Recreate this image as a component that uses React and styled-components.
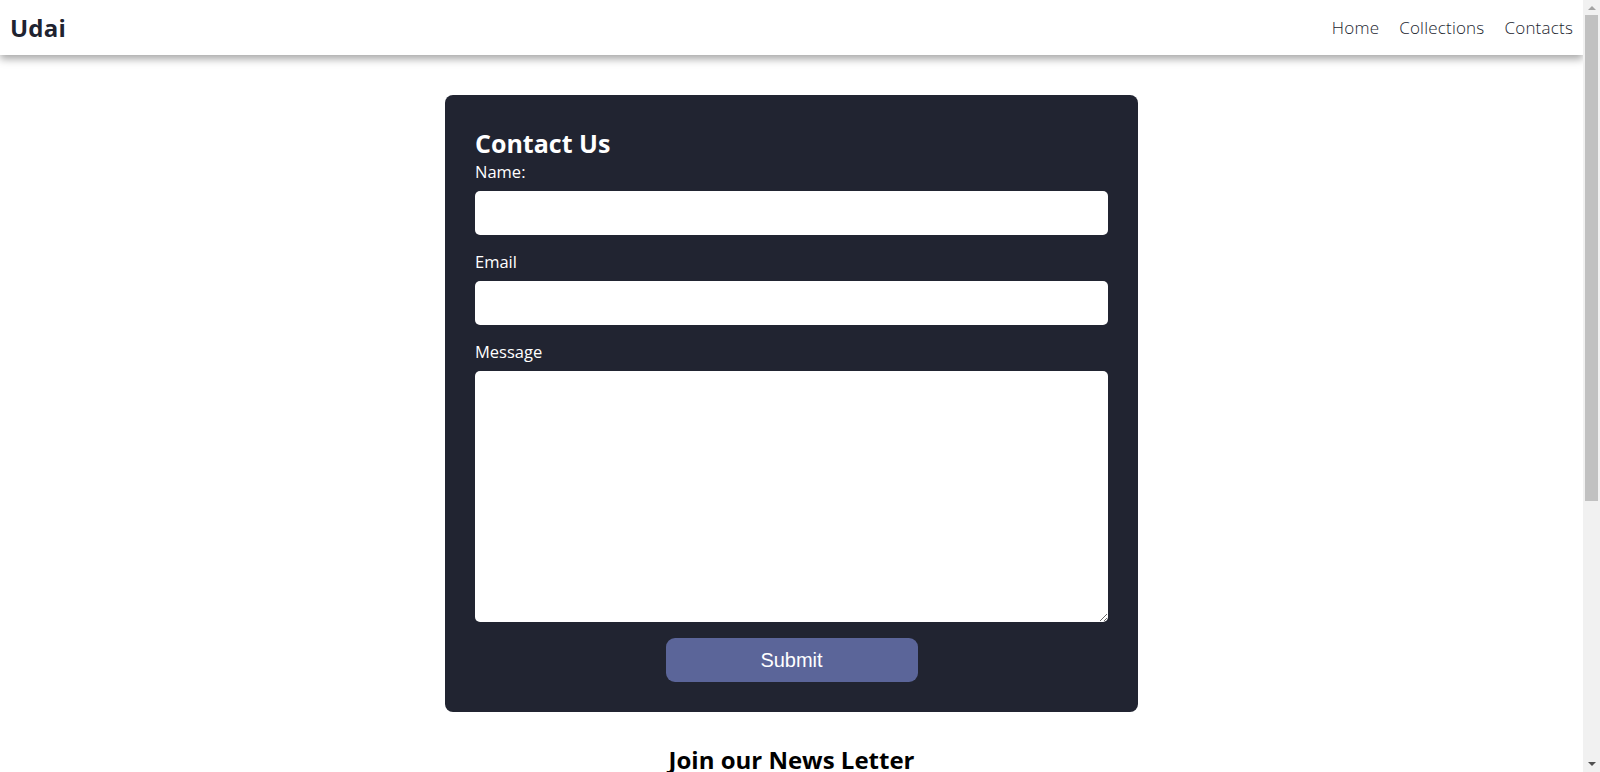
import styled, { createGlobalStyle } from 'styled-components';

const GlobalStyle = createGlobalStyle`
  * {
    box-sizing: border-box;
  }
  body {
    margin: 0;
    padding-right: 17px;
    font-family: "Open Sans", "Liberation Sans", sans-serif;
    background: #fff;
  }
`;

function App() {
  return (
    <>
      <GlobalStyle />
      <Header>
        <Logo>Udai</Logo>
        <Nav>
          <NavLink href="#">Home</NavLink>
          <NavLink href="#">Collections</NavLink>
          <NavLink href="#">Contacts</NavLink>
        </Nav>
      </Header>
      <Main>
        <Card onSubmit={(e) => e.preventDefault()}>
          <Title>Contact Us</Title>
          <Label htmlFor="name">Name:</Label>
          <Input id="name" type="text" />
          <Label htmlFor="email">Email</Label>
          <Input id="email" type="email" />
          <Label htmlFor="message">Message</Label>
          <TextArea id="message" />
          <SubmitButton type="submit">Submit</SubmitButton>
        </Card>
        <NewsLetter>
          <NewsTitle>Join our News Letter</NewsTitle>
          <NewsText>Get the latest collections and offers straight to your inbox.</NewsText>
          <NewsForm onSubmit={(e) => e.preventDefault()}>
            <NewsInput type="email" placeholder="Enter your email" />
            <NewsButton type="submit">Subscribe</NewsButton>
          </NewsForm>
        </NewsLetter>
      </Main>
      <Footer>
        <FooterLogo>Udai</FooterLogo>
        <FooterText>© 2024 Udai. All rights reserved.</FooterText>
      </Footer>
      <ScrollTrack>
        <ArrowUp />
        <Thumb />
        <ArrowDown />
      </ScrollTrack>
    </>
  );
}

export default App;

const Header = styled.header`
  position: sticky;
  top: 0;
  z-index: 10;
  height: 55px;
  display: flex;
  justify-content: space-between;
  align-items: center;
  padding: 0 10px;
  background: #fff;
  box-shadow: 0 4px 8px rgba(0, 0, 0, 0.35);
`;

const Logo = styled.h1`
  margin: 0;
  font-size: 24px;
  font-weight: 700;
  color: #202330;
  letter-spacing: 0.2px;
`;

const Nav = styled.nav`
  display: flex;
  gap: 20px;
`;

const NavLink = styled.a`
  font-size: 17px;
  font-weight: 300;
  color: #22252f;
  text-decoration: none;
  letter-spacing: 0.2px;
`;

const Main = styled.main`
  display: flex;
  flex-direction: column;
  align-items: center;
  padding-top: 40px;
`;

const Card = styled.form`
  width: 693px;
  display: flex;
  flex-direction: column;
  padding: 30px;
  background: #212431;
  border-radius: 8px;
`;

const Title = styled.h2`
  margin: 0;
  font-size: 25px;
  line-height: 36px;
  font-weight: 700;
  color: #fff;
`;

const Label = styled.label`
  display: block;
  font-size: 16.5px;
  line-height: 22px;
  color: #fff;
  margin-bottom: 8px;
`;

const Input = styled.input`
  width: 100%;
  height: 44px;
  border: none;
  border-radius: 5px;
  padding: 0 10px;
  font-size: 16px;
  margin-bottom: 16px;
  background: #fff;
`;

const TextArea = styled.textarea`
  width: 100%;
  height: 251px;
  border: none;
  border-radius: 5px;
  padding: 10px;
  font-size: 16px;
  margin: 0 0 16px;
  background: #fff;
`;

const SubmitButton = styled.button`
  align-self: center;
  width: 252px;
  height: 44px;
  border: none;
  border-radius: 9px;
  background: #5b6599;
  color: #fff;
  font-family: "Liberation Sans", Arial, sans-serif;
  font-size: 20px;
  cursor: pointer;
`;

const NewsLetter = styled.section`
  display: flex;
  flex-direction: column;
  align-items: center;
  padding: 30px 0 60px;
`;

const NewsTitle = styled.h2`
  margin: 0;
  font-size: 24px;
  line-height: 36px;
  font-weight: 700;
  color: #000;
`;

const NewsText = styled.p`
  margin: 12px 0 24px;
  font-size: 15px;
  color: #555;
`;

const NewsForm = styled.form`
  display: flex;
  gap: 10px;
  width: 500px;
`;

const NewsInput = styled.input`
  flex: 1;
  height: 44px;
  border: 1px solid #ccc;
  border-radius: 5px;
  padding: 0 12px;
  font-size: 15px;
`;

const NewsButton = styled.button`
  height: 44px;
  padding: 0 24px;
  border: none;
  border-radius: 8px;
  background: #5b6599;
  color: #fff;
  font-size: 16px;
`;

const Footer = styled.footer`
  display: flex;
  flex-direction: column;
  align-items: center;
  justify-content: center;
  gap: 8px;
  height: 160px;
  background: #212431;
`;

const FooterLogo = styled.p`
  margin: 0;
  font-size: 22px;
  font-weight: 700;
  color: #fff;
`;

const FooterText = styled.p`
  margin: 0;
  font-size: 14px;
  color: #b8bccb;
`;

/* browser scrollbar, drawn over the right edge */
const ScrollTrack = styled.div`
  position: fixed;
  top: 0;
  right: 0;
  bottom: 0;
  width: 17px;
  z-index: 20;
  display: flex;
  flex-direction: column;
  align-items: center;
  background: #f1f1f1;
`;

const ArrowUp = styled.div`
  width: 0;
  height: 0;
  margin: 6px 0 5px;
  border-left: 4px solid transparent;
  border-right: 4px solid transparent;
  border-bottom: 4px solid #a3a3a3;
`;

const Thumb = styled.div`
  width: 13px;
  height: 486px;
  background: #c1c1c1;
`;

const ArrowDown = styled.div`
  width: 0;
  height: 0;
  margin-top: auto;
  margin-bottom: 6px;
  border-left: 4px solid transparent;
  border-right: 4px solid transparent;
  border-top: 4px solid #505050;
`;
